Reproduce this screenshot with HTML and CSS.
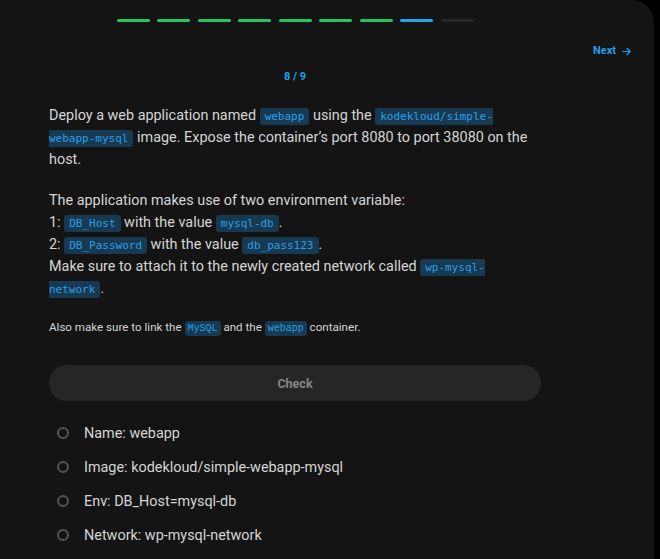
FILE: index.html
```html
<!DOCTYPE html>
<html>
<head>
<meta charset="utf-8">
<link rel="stylesheet" href="styles.css">
</head>
<body>
<div class="panel">
  <div class="progress">
    <span class="seg done"></span><span class="seg done"></span><span class="seg done"></span><span class="seg done"></span><span class="seg done"></span><span class="seg done"></span><span class="seg done"></span><span class="seg current"></span><span class="seg"></span>
  </div>
  <div class="nav">
    <a class="next">Next
      <svg width="11" height="11" viewBox="0 0 24 24" fill="none" stroke="currentColor" stroke-width="2.6" stroke-linecap="round" stroke-linejoin="round"><path d="M4 12h15"/><path d="M13 5l7 7-7 7"/></svg>
    </a>
  </div>
  <div class="content">
    <div class="counter">8 / 9</div>
    <p class="task">Deploy a web application named <code>webapp</code> using the <code>kodekloud/simple-<span class="nw">webapp-mysql</span></code> image. Expose the container’s port 8080 to port 38080 on the host.</p>
    <p class="task">The application makes use of two environment variable:<br>1: <code>DB_Host</code> with the value <code>mysql-db</code>.<br>2: <code>DB_Password</code> with the value <code>db_pass123</code>.<br>Make sure to attach it to the newly created network called <code>wp-mysql-network</code>.</p>
    <p class="note">Also make sure to link the <code>MySQL</code> and the <code>webapp</code> container.</p>
    <button class="check">Check</button>
    <ul class="checks">
      <li><span class="dot"></span>Name: webapp</li>
      <li><span class="dot"></span>Image: kodekloud/simple-webapp-mysql</li>
      <li><span class="dot"></span>Env: DB_Host=mysql-db</li>
      <li><span class="dot"></span>Network: wp-mysql-network</li>
    </ul>
  </div>
</div>
</body>
</html>
```
FILE: styles.css
```css
html, body {
  margin: 0;
  padding: 0;
  background: #000;
  height: 100%;
  overflow: hidden;
}
body {
  font-family: Roboto, "Noto Sans", sans-serif;
  color: #d4d4d4;
}
.panel {
  width: 654px;
  height: 559px;
  background: #141414;
  border-top-right-radius: 22px;
  display: flex;
  flex-direction: column;
  box-sizing: border-box;
}
.progress {
  width: 492px;
  margin-left: 49px;
  margin-top: 19px;
  display: flex;
  justify-content: center;
  gap: 7.5px;
}
.seg {
  width: 33px;
  height: 3px;
  border-radius: 2px;
  background: #262626;
}
.seg.done { background: #22c55e; }
.seg.current { background: #1ea7f4; }
.nav {
  display: flex;
  justify-content: flex-end;
  padding-right: 22px;
  margin-top: 22px;
}
.next {
  color: #1f9ef0;
  font-size: 11px;
  font-weight: 700;
  display: flex;
  align-items: center;
  gap: 5px;
  line-height: 14px;
}
.content {
  width: 492px;
  margin-left: 49px;
}
.counter {
  text-align: center;
  color: #1f9ef0;
  font-size: 11px;
  font-weight: 700;
  margin-top: 12px;
  line-height: 14px;
}
.task {
  font-size: 14.4px;
  line-height: 22px;
  margin: 21px 6px 0 0;
}
.task + .task {
  margin-top: 19px;
}
code {
  font-family: "DejaVu Sans Mono", monospace;
  font-size: 11px;
  line-height: 1;
  color: #2a9fe6;
  background: #173a52;
  padding: 2px 5px;
  border-radius: 3px;
}
.nw {
  white-space: nowrap;
}
.note {
  font-size: 11.6px;
  line-height: 18px;
  margin: 18px 0 0;
}
.note code {
  font-family: "Liberation Mono", monospace;
  font-size: 10px;
  padding: 2px 3px;
}
.check {
  display: block;
  width: 492px;
  height: 36px;
  margin-top: 29px;
  border: none;
  border-radius: 18px;
  background: #262626;
  color: #858585;
  font-family: Roboto, sans-serif;
  font-size: 12.5px;
  font-weight: 700;
}
.checks {
  list-style: none;
  margin: 15px 0 0;
  padding: 0;
}
.checks li {
  display: flex;
  align-items: center;
  height: 34px;
  font-size: 14.4px;
  padding-left: 8px;
}
.dot {
  width: 8px;
  height: 8px;
  border: 2px solid #555;
  border-radius: 50%;
  margin-right: 15px;
}
```
